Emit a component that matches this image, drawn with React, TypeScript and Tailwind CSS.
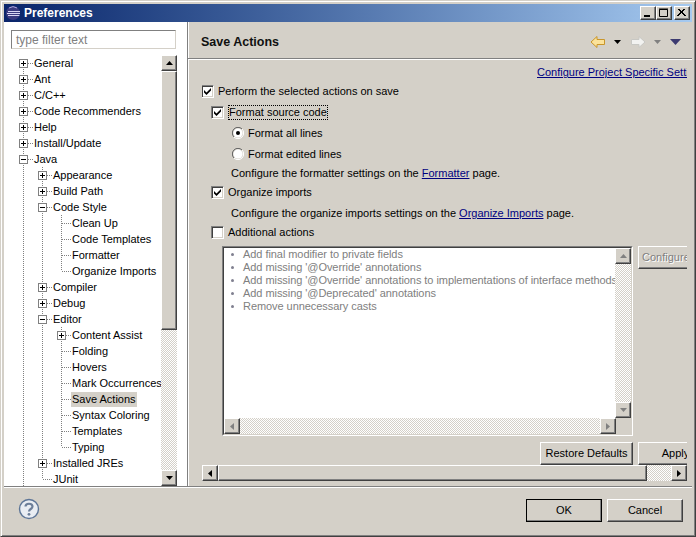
import React from "react";

const FONT = "font-['Liberation_Sans',sans-serif]";
const DITHER = "bg-[repeating-conic-gradient(#ffffff_0_25%,#d4d0c8_0_50%)] bg-[length:2px_2px]";

type Node = { t: string; l: number; k: "+" | "-" | "."; g: number[]; sel?: boolean; end?: boolean };

const rows: Node[] = [
  { t: "General", l: 0, k: "+", g: [] },
  { t: "Ant", l: 0, k: "+", g: [] },
  { t: "C/C++", l: 0, k: "+", g: [] },
  { t: "Code Recommenders", l: 0, k: "+", g: [] },
  { t: "Help", l: 0, k: "+", g: [] },
  { t: "Install/Update", l: 0, k: "+", g: [] },
  { t: "Java", l: 0, k: "-", g: [] },
  { t: "Appearance", l: 1, k: "+", g: [0] },
  { t: "Build Path", l: 1, k: "+", g: [0] },
  { t: "Code Style", l: 1, k: "-", g: [0] },
  { t: "Clean Up", l: 2, k: ".", g: [0, 1] },
  { t: "Code Templates", l: 2, k: ".", g: [0, 1] },
  { t: "Formatter", l: 2, k: ".", g: [0, 1] },
  { t: "Organize Imports", l: 2, k: ".", g: [0, 1], end: true },
  { t: "Compiler", l: 1, k: "+", g: [0] },
  { t: "Debug", l: 1, k: "+", g: [0] },
  { t: "Editor", l: 1, k: "-", g: [0] },
  { t: "Content Assist", l: 2, k: "+", g: [0, 1] },
  { t: "Folding", l: 2, k: ".", g: [0, 1] },
  { t: "Hovers", l: 2, k: ".", g: [0, 1] },
  { t: "Mark Occurrences", l: 2, k: ".", g: [0, 1] },
  { t: "Save Actions", l: 2, k: ".", g: [0, 1], sel: true },
  { t: "Syntax Coloring", l: 2, k: ".", g: [0, 1] },
  { t: "Templates", l: 2, k: ".", g: [0, 1] },
  { t: "Typing", l: 2, k: ".", g: [0, 1], end: true },
  { t: "Installed JREs", l: 1, k: "+", g: [0] },
  { t: "JUnit", l: 1, k: ".", g: [0], end: true },
];

function Guide() {
  return (
    <svg width="19" height="16" className="shrink-0">
      <line x1="9.5" y1="0" x2="9.5" y2="16" stroke="#808080" strokeDasharray="1 1" />
    </svg>
  );
}

function Connector({ k, end, first }: { k: string; end?: boolean; first?: boolean }) {
  return (
    <svg width="19" height="16" className="shrink-0">
      <line x1="9.5" y1={first ? 8 : 0} x2="9.5" y2={end ? 8 : 16} stroke="#808080" strokeDasharray="1 1" />
      <line x1="10" y1="8.5" x2="19" y2="8.5" stroke="#808080" strokeDasharray="1 1" />
      {k !== "." && (
        <>
          <rect x="5.5" y="4.5" width="8" height="8" fill="#fff" stroke="#808080" />
          <line x1="7" y1="8.5" x2="12" y2="8.5" stroke="#000" />
          {k === "+" && <line x1="9.5" y1="6" x2="9.5" y2="11" stroke="#000" />}
        </>
      )}
    </svg>
  );
}

function TreeRow({ n, i }: { n: Node; i: number }) {
  return (
    <div className="flex h-4 items-center">
      {n.g.map((g) => (
        <Guide key={g} />
      ))}
      <Connector k={n.k} end={n.end} first={i === 0} />
      <span className={`px-px text-[11px] leading-[15px] whitespace-nowrap text-black ${n.sel ? "bg-[#d4d0c8]" : ""}`}>
        {n.t}
      </span>
    </div>
  );
}

function Arrow({ d, c = "#000" }: { d: "u" | "d" | "l" | "r"; c?: string }) {
  const p = { u: "0,4 7,4 3.5,0", d: "0,0 7,0 3.5,4", l: "4,0 4,7 0,3.5", r: "0,0 0,7 4,3.5" }[d];
  const hor = d === "u" || d === "d";
  return (
    <svg width={hor ? 7 : 4} height={hor ? 4 : 7}>
      <polygon points={p} fill={c} />
    </svg>
  );
}

const raised =
  "border border-t-white border-l-white border-r-[#404040] border-b-[#404040] bg-[#d4d0c8] shadow-[inset_-1px_-1px_0_#808080]";

function ScrollBtn({ d, c }: { d: "u" | "d" | "l" | "r"; c?: string }) {
  return (
    <div className={`flex h-4 w-4 shrink-0 items-center justify-center ${raised}`}>
      <Arrow d={d} c={c} />
    </div>
  );
}

function Check({ checked, className = "" }: { checked?: boolean; className?: string }) {
  return (
    <span
      className={`flex h-[13px] w-[13px] shrink-0 items-center justify-center border border-t-[#808080] border-l-[#808080] border-r-white border-b-white bg-white shadow-[inset_1px_1px_0_#404040,inset_-1px_-1px_0_#d4d0c8] ${className}`}
    >
      {checked && (
        <svg width="9" height="9" viewBox="0 0 9 9">
          <path d="M1 3 L3.5 5.5 L8 1 V3.5 L3.5 8 L1 5.5 Z" fill="#000" />
        </svg>
      )}
    </span>
  );
}

function Radio({ on }: { on?: boolean }) {
  return (
    <svg width="12" height="12" className="shrink-0">
      <path d="M10 2 A5.6 5.6 0 0 0 2 10" fill="none" stroke="#606060" />
      <path d="M2 10 A5.6 5.6 0 0 0 10 2" fill="none" stroke="#ffffff" />
      <circle cx="6" cy="6" r="4.6" fill="#fff" />
      {on && <circle cx="6" cy="6" r="2" fill="#000" />}
    </svg>
  );
}

function Link({ children }: { children: React.ReactNode }) {
  return <span className="text-[#000080] underline">{children}</span>;
}

const Btn = ({ children, className = "" }: { children: React.ReactNode; className?: string }) => (
  <div className={`flex h-[23px] items-center justify-center whitespace-nowrap text-[11px] ${raised} ${className}`}>
    {children}
  </div>
);

function Caption({ kind }: { kind: "min" | "max" | "x" }) {
  return (
    <div className={`flex h-[14px] w-4 items-center justify-center ${raised}`}>
      <svg width="10" height="10">
        {kind === "min" && <rect x="1" y="7" width="6" height="2" fill="#000" />}
        {kind === "max" && <path d="M0.5 1.5H8.5V8.5H0.5Z M0 1H9" fill="none" stroke="#000" />}
        {kind === "x" && <path d="M1 1L8 8M8 1L1 8M2 1L9 8M7 1L0 8" stroke="#000" />}
      </svg>
    </div>
  );
}

const bullets = [
  "Add final modifier to private fields",
  "Add missing '@Override' annotations",
  "Add missing '@Override' annotations to implementations of interface methods",
  "Add missing '@Deprecated' annotations",
  "Remove unnecessary casts",
];

export default function App() {
  return (
    <div className={`${FONT} h-[537px] w-[696px] overflow-hidden bg-[#d4d0c8] text-[11px] text-black`}>
      <div className="flex h-[537px] w-[696px] flex-col border border-t-[#d4d0c8] border-l-[#d4d0c8] border-r-[#404040] border-b-[#404040] p-[3px] shadow-[inset_1px_1px_0_#fff,inset_-1px_-1px_0_#808080]">
        {/* title bar */}
        <div className="flex h-[18px] shrink-0 items-center bg-gradient-to-r from-[#0a246a] to-[#a6caf0] pl-[1px] pr-[2px]">
          <svg width="16" height="16" viewBox="0 0 16 16" className="mr-[3px] shrink-0">
            <circle cx="8" cy="8" r="7" fill="#3b3a80" />
            <path d="M3 6.5 H15 M2 8.5 H15 M3 10.5 H14.4" stroke="#d9d6f4" strokeWidth="1" />
            <path d="M4 3 A7 7 0 0 1 12 3" stroke="#a9a4dc" fill="none" />
          </svg>
          <span className="text-[12px] font-bold text-white">Preferences</span>
          <div className="ml-auto flex items-center">
            <Caption kind="min" />
            <Caption kind="max" />
            <div className="ml-[2px] flex">
              <Caption kind="x" />
            </div>
          </div>
        </div>

        {/* body */}
        <div className="flex h-[464px] shrink-0">
          {/* left */}
          <div className="flex w-[183px] shrink-0 flex-col bg-white pl-[7px] pt-[8px]">
            <div className="flex h-[19px] w-[165px] items-center border border-t-[#808080] border-l-[#808080] border-r-[#d4d0c8] border-b-[#d4d0c8] pl-[4px] text-[12px] text-[#808080]">
              type filter text
            </div>
            <div className="mt-[6px] flex h-[431px] w-[166px] overflow-hidden">
              <div className="flex w-[150px] shrink-0 flex-col overflow-hidden pl-[3px]">
                {rows.map((n, i) => (
                  <TreeRow key={n.t} n={n} i={i} />
                ))}
              </div>
              <div className="flex w-4 shrink-0 flex-col">
                <ScrollBtn d="u" />
                <div className={`h-[259px] shrink-0 ${raised}`} />
                <div className={`flex-1 ${DITHER}`} />
                <ScrollBtn d="d" />
              </div>
            </div>
          </div>

          {/* right */}
          <div className="flex min-w-0 flex-1 flex-col border-l border-l-[#808080] shadow-[inset_1px_0_0_#fff]">
            <div className="flex h-[36px] shrink-0 items-center pl-[13px] pr-[11px] pt-[4px]">
              <span className="text-[12.5px] font-bold text-[#101010]">Save Actions</span>
              <div className="ml-auto flex items-center">
                <svg width="16" height="14" viewBox="0 0 16 14">
                  <path d="M1 7 L7 1.5 V4.5 H14.5 V9.5 H7 V12.5 Z" fill="#fbe29a" stroke="#c9962b" />
                </svg>
                <div className="ml-[8px] flex"><Arrow d="d" /></div>
                <svg width="16" height="14" viewBox="0 0 16 14" className="ml-[9px]">
                  <path d="M15 7 L9 1.5 V4.5 H1.5 V9.5 H9 V12.5 Z" fill="#f2f2f0" stroke="#c8c8c4" />
                </svg>
                <div className="ml-[8px] flex"><Arrow d="d" c="#808080" /></div>
                <div className="ml-[9px] flex">
                  <svg width="11" height="6"><polygon points="0,0 11,0 5.5,6" fill="#3c3a70" /></svg>
                </div>
              </div>
            </div>
            <div className="h-[2px] shrink-0 border-t border-b border-t-[#808080] border-b-white" />

            <div className="ml-[14px] w-[485px] flex-1 overflow-hidden">
              <div className="w-[540px]">
                <div className="mt-[4px] flex h-[17px] items-center pl-[335px] whitespace-nowrap">
                  <Link>Configure Project Specific Settings...</Link>
                </div>
                <div className="mt-[1px] flex h-[18px] items-center">
                  <Check checked className="-ml-px" />
                  <span className="ml-[4px]">Perform the selected actions on save</span>
                </div>
                <div className="mt-[3px] ml-[9px] flex h-[18px] items-center">
                  <Check checked />
                  <span className="ml-[4px] border border-dotted border-black leading-[13px]">Format source code</span>
                </div>
                <div className="mt-[3px] ml-[30px] flex h-[18px] items-center">
                  <Radio on />
                  <span className="ml-[4px]">Format all lines</span>
                </div>
                <div className="mt-[3px] ml-[30px] flex h-[18px] items-center">
                  <Radio />
                  <span className="ml-[4px]">Format edited lines</span>
                </div>
                <div className="mt-[1px] ml-[29px] flex h-[18px] items-center">
                  <span>Configure the formatter settings on the&nbsp;<Link>Formatter</Link>&nbsp;page.</span>
                </div>
                <div className="mt-[1px] ml-[9px] flex h-[18px] items-center">
                  <Check checked />
                  <span className="ml-[4px]">Organize imports</span>
                </div>
                <div className="mt-[3px] ml-[29px] flex h-[18px] items-center">
                  <span>Configure the organize imports settings on the&nbsp;<Link>Organize Imports</Link>&nbsp;page.</span>
                </div>
                <div className="mt-[1px] ml-[9px] flex h-[18px] items-center">
                  <Check />
                  <span className="ml-[4px]">Additional actions</span>
                </div>

                <div className="mt-[5px] flex items-start">
                  {/* list box */}
                  <div className="ml-[20px] h-[190px] w-[411px] shrink-0 border border-t-[#808080] border-l-[#808080] border-r-white border-b-white">
                    <div className="flex h-[188px] flex-col border border-t-[#404040] border-l-[#404040] border-r-[#d4d0c8] border-b-[#d4d0c8]">
                      <div className="flex min-h-0 flex-1">
                        <div className="min-w-0 flex-1 overflow-hidden bg-white pl-[7px] text-[#808080]">
                          {bullets.map((b) => (
                            <div key={b} className="flex h-[13px] items-center whitespace-nowrap">
                              <span className="mr-[9px] h-[3px] w-[3px] shrink-0 rounded-full bg-[#808090]" />
                              <span className="text-[11px] leading-[13px] tracking-[-0.06px]">{b}</span>
                            </div>
                          ))}
                        </div>
                        <div className="flex w-4 shrink-0 flex-col">
                          <ScrollBtn d="u" c="#808080" />
                          <div className={`flex-1 ${DITHER}`} />
                          <ScrollBtn d="d" c="#808080" />
                        </div>
                      </div>
                      <div className="flex h-4 shrink-0">
                        <ScrollBtn d="l" c="#808080" />
                        <div className={`flex-1 ${DITHER}`} />
                        <ScrollBtn d="r" c="#808080" />
                        <div className="w-[15px] shrink-0" />
                      </div>
                    </div>
                  </div>
                  <Btn className="ml-[5px] w-[65px] shrink-0 text-[#808080] [text-shadow:1px_1px_0_#fff]">Configure...</Btn>
                </div>

                <div className="mt-[6px] flex">
                  <Btn className="ml-[338px] w-[93px]">Restore Defaults</Btn>
                  <Btn className="ml-[5px] w-[75px]">Apply</Btn>
                </div>
              </div>
            </div>

            {/* right panel horizontal scrollbar */}
            <div className="ml-[14px] mb-[5px] flex h-4 w-[485px] shrink-0">
              <ScrollBtn d="l" />
              <div className={`w-[429px] shrink-0 ${raised}`} />
              <div className={`flex-1 ${DITHER}`} />
              <ScrollBtn d="r" />
            </div>
          </div>
        </div>

        {/* separator */}
        <div className="h-[2px] shrink-0 border-t border-b border-t-[#808080] border-b-white" />

        {/* footer */}
        <div className="flex flex-1 items-center pl-[14px] pr-[9px]">
          <svg width="22" height="22" viewBox="0 0 22 22" className="-mt-[4px]">
            <circle cx="11" cy="11" r="9.5" fill="#e9edf3" stroke="#5d7597" strokeWidth="1.4" />
            <path d="M7.5 8.5 C7.5 4.8 14.5 4.8 14.5 8.5 C14.5 11 11 11 11 13.5" fill="none" stroke="#6d7f9a" strokeWidth="2.2" />
            <circle cx="11" cy="16.3" r="1.4" fill="#6d7f9a" />
          </svg>
          <div className="ml-auto flex gap-[5px]">
            <Btn className="w-[76px] outline outline-1 -outline-offset-1 outline-black">OK</Btn>
            <Btn className="w-[76px]">Cancel</Btn>
          </div>
        </div>
      </div>
    </div>
  );
}
